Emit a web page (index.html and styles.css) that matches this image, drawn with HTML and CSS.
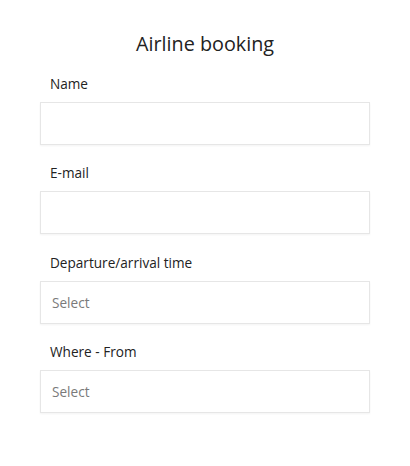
FILE: index.html
```html
<!DOCTYPE html>
<html>
<head>
<meta charset="utf-8">
<link rel="stylesheet" href="styles.css">
</head>
<body>
<form class="booking">
  <h1 class="title">Airline booking</h1>
  <div class="field">
    <label class="label">Name</label>
    <div class="box"></div>
  </div>
  <div class="field">
    <label class="label">E-mail</label>
    <div class="box"></div>
  </div>
  <div class="field">
    <label class="label">Departure/arrival time</label>
    <div class="box"><span class="placeholder">Select</span></div>
  </div>
  <div class="field">
    <label class="label">Where - From</label>
    <div class="box"><span class="placeholder">Select</span></div>
  </div>
</form>
</body>
</html>
```
FILE: styles.css
```css
html, body {
  margin: 0;
  padding: 0;
  background: #ffffff;
}
body {
  font-family: "Open Sans", "Noto Sans", sans-serif;
  color: #222222;
}
.booking {
  width: 330px;
  margin: 0 auto;
  padding-top: 30px;
  display: flex;
  flex-direction: column;
}
.title {
  margin: 0 0 16px 0;
  font-size: 19.8px;
  font-weight: 400;
  line-height: 28px;
  text-align: center;
  color: #222222;
}
.field {
  display: flex;
  flex-direction: column;
  margin-bottom: 18.4px;
}
.label {
  display: block;
  padding-left: 10px;
  font-size: 13.6px;
  line-height: 20px;
  margin-bottom: 8px;
  color: #222222;
}
.box {
  box-sizing: border-box;
  height: 43px;
  border: 1px solid #e6e6e6;
  box-shadow: 0 1px 2px rgba(0,0,0,0.05);
  display: flex;
  align-items: center;
  padding-left: 11px;
}
.placeholder {
  font-size: 13.6px;
  color: #7a7a7a;
}
```
